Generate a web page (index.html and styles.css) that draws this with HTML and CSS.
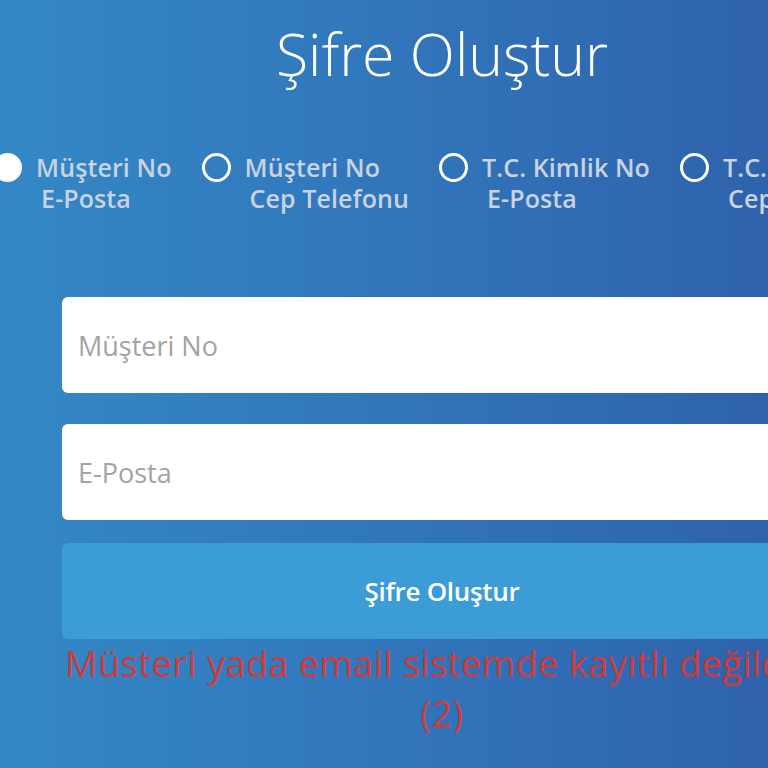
FILE: index.html
```html
<!DOCTYPE html>
<html lang="tr">
<head>
<meta charset="utf-8">
<title>Şifre Oluştur</title>
<link rel="stylesheet" href="styles.css">
</head>
<body>
<div class="page">
  <div class="wrap">
    <h1 class="title">Şifre Oluştur</h1>
    <div class="radios">
      <label class="radio">
        <span class="dot checked"></span>
        <span class="rlabel">Müşteri No<br><span class="l2">E-Posta</span></span>
      </label>
      <label class="radio">
        <span class="dot"></span>
        <span class="rlabel">Müşteri No<br><span class="l2">Cep Telefonu</span></span>
      </label>
      <label class="radio">
        <span class="dot"></span>
        <span class="rlabel">T.C. Kimlik No<br><span class="l2">E-Posta</span></span>
      </label>
      <label class="radio">
        <span class="dot"></span>
        <span class="rlabel">T.C. Kimlik No<br><span class="l2">Cep Telefonu</span></span>
      </label>
    </div>
    <form class="form">
      <input class="field" type="text" placeholder="Müşteri No">
      <input class="field" type="text" placeholder="E-Posta">
      <button class="submit" type="button">Şifre Oluştur</button>
    </form>
    <p class="error">Müsteri yada email sistemde kayıtlı değildir. (2)</p>
  </div>
</div>
</body>
</html>
```

FILE: styles.css
```css
html, body {
  margin: 0;
  padding: 0;
  height: 100%;
}
body {
  overflow: hidden;
  background: linear-gradient(90deg, #3488c6 0%, #3176bb 50%, #2f62ad 100%);
  font-family: "Open Sans", Lato, sans-serif;
}
.page {
  width: 768px;
  height: 768px;
  overflow: hidden;
}
.wrap {
  width: 760px;
  margin-left: 62px;
}
.title {
  margin: 0;
  padding-top: 18px;
  line-height: 70px;
  font-size: 59px;
  font-weight: 300;
  color: #ffffff;
  text-align: center;
}
.radios {
  margin-top: 64px;
  display: flex;
  justify-content: center;
  gap: 30px;
  white-space: nowrap;
}
.radio {
  display: flex;
  align-items: flex-start;
  flex: none;
}
.dot {
  width: 23px;
  height: 23px;
  border: 3px solid #ffffff;
  border-radius: 50%;
  margin-top: 1px;
  margin-right: 14px;
  flex: none;
}
.dot.checked {
  background: #ffffff;
}
.rlabel {
  font-size: 25px;
  line-height: 31px;
  font-weight: 600;
  letter-spacing: 0.1px;
  color: #c9d3e2;
}
.l2 {
  padding-left: 5px;
}
.form {
  margin-top: 83px;
  display: flex;
  flex-direction: column;
}
.field {
  box-sizing: border-box;
  height: 96px;
  border: 0;
  border-radius: 6px;
  background: #ffffff;
  padding: 0 16px;
  font-family: "Open Sans", Lato, sans-serif;
  font-size: 27px;
  color: #555555;
  outline: none;
}
.field + .field {
  margin-top: 31px;
}
.field::placeholder {
  color: #a3a3a3;
}
.submit {
  margin-top: 23px;
  height: 96px;
  border: 0;
  border-radius: 6px;
  background: #3b9cd6;
  color: #ffffff;
  font-family: "Open Sans", Lato, sans-serif;
  font-size: 26px;
  font-weight: 600;
  letter-spacing: -0.3px;
}
.error {
  margin: 0;
  text-align: center;
  font-size: 36px;
  line-height: 50px;
  letter-spacing: 0.5px;
  color: #d23a3a;
}
```
